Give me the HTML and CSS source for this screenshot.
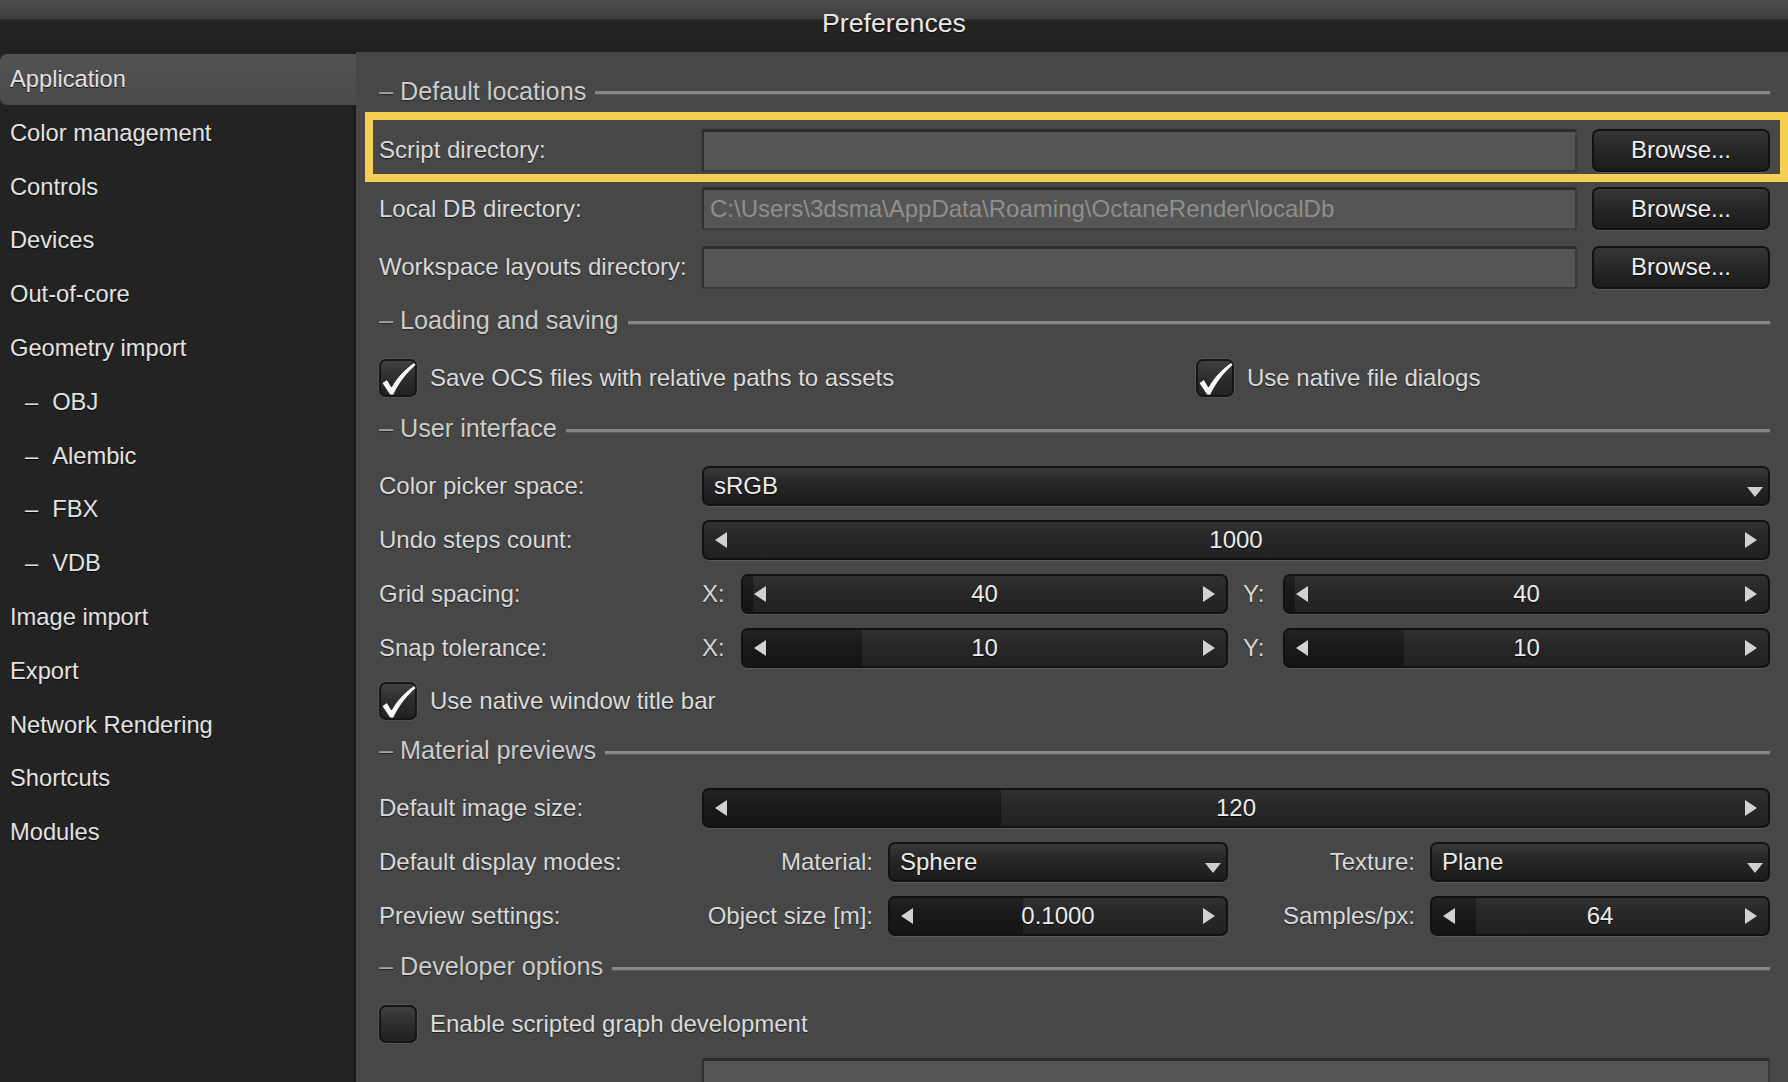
FILE: index.html
```html
<!DOCTYPE html>
<html>
<head>
<meta charset="utf-8">
<title>Preferences</title>
<link rel="stylesheet" href="styles.css">
</head>
<body>
<div class="titlebar"><span class="title">Preferences</span></div>
<div class="body">
  <nav class="sidebar">
    <div class="nav-item active">Application</div>
    <div class="nav-item">Color management</div>
    <div class="nav-item">Controls</div>
    <div class="nav-item">Devices</div>
    <div class="nav-item">Out-of-core</div>
    <div class="nav-item">Geometry import</div>
    <div class="nav-item sub"><span class="sub-dash">–</span>OBJ</div>
    <div class="nav-item sub"><span class="sub-dash">–</span>Alembic</div>
    <div class="nav-item sub"><span class="sub-dash">–</span>FBX</div>
    <div class="nav-item sub"><span class="sub-dash">–</span>VDB</div>
    <div class="nav-item">Image import</div>
    <div class="nav-item">Export</div>
    <div class="nav-item">Network Rendering</div>
    <div class="nav-item">Shortcuts</div>
    <div class="nav-item">Modules</div>
  </nav>
  <main class="content">
    <div class="sec-head"><span class="sec-dash">–</span><span class="sec-title">Default locations</span><span class="sec-line"></span></div>
    <div class="row loc highlighted">
      <span class="label">Script directory:</span>
      <div class="field"></div>
      <div class="btn">Browse...</div>
    </div>
    <div class="row loc">
      <span class="label">Local DB directory:</span>
      <div class="field"><span class="placeholder">C:\Users\3dsma\AppData\Roaming\OctaneRender\localDb</span></div>
      <div class="btn">Browse...</div>
    </div>
    <div class="row loc">
      <span class="label">Workspace layouts directory:</span>
      <div class="field"></div>
      <div class="btn">Browse...</div>
    </div>

    <div class="sec-head"><span class="sec-dash">–</span><span class="sec-title">Loading and saving</span><span class="sec-line"></span></div>
    <div class="row checks">
      <div class="check">
        <span class="box"><svg class="tick" viewBox="0 0 38 38" width="38" height="38"><path d="M3 24 L8 20.5 L12.5 28 C18 18 26 10 35 3.5 L37 6 C28 14 20 24 14.5 36 L11 36 Z"/></svg></span>
        <span class="check-text">Save OCS files with relative paths to assets</span>
      </div>
      <div class="check">
        <span class="box"><svg class="tick" viewBox="0 0 38 38" width="38" height="38"><path d="M3 24 L8 20.5 L12.5 28 C18 18 26 10 35 3.5 L37 6 C28 14 20 24 14.5 36 L11 36 Z"/></svg></span>
        <span class="check-text">Use native file dialogs</span>
      </div>
    </div>

    <div class="sec-head"><span class="sec-dash">–</span><span class="sec-title">User interface</span><span class="sec-line"></span></div>
    <div class="row">
      <span class="label">Color picker space:</span>
      <div class="combo"><span class="combo-text">sRGB</span><span class="combo-arrow"></span></div>
    </div>
    <div class="row">
      <span class="label">Undo steps count:</span>
      <div class="slider"><span class="arr left"></span><span class="val">1000</span><span class="arr right"></span></div>
    </div>
    <div class="row">
      <span class="label">Grid spacing:</span>
      <div class="pair">
        <span class="axis">X:</span>
        <div class="slider"><div class="fill" style="width:2%"></div><span class="arr left"></span><span class="val">40</span><span class="arr right"></span></div>
        <span class="axis y">Y:</span>
        <div class="slider"><div class="fill" style="width:2%"></div><span class="arr left"></span><span class="val">40</span><span class="arr right"></span></div>
      </div>
    </div>
    <div class="row">
      <span class="label">Snap tolerance:</span>
      <div class="pair">
        <span class="axis">X:</span>
        <div class="slider"><div class="fill" style="width:24.6%"></div><span class="arr left"></span><span class="val">10</span><span class="arr right"></span></div>
        <span class="axis y">Y:</span>
        <div class="slider"><div class="fill" style="width:24.6%"></div><span class="arr left"></span><span class="val">10</span><span class="arr right"></span></div>
      </div>
    </div>
    <div class="row checks short">
      <div class="check">
        <span class="box"><svg class="tick" viewBox="0 0 38 38" width="38" height="38"><path d="M3 24 L8 20.5 L12.5 28 C18 18 26 10 35 3.5 L37 6 C28 14 20 24 14.5 36 L11 36 Z"/></svg></span>
        <span class="check-text">Use native window title bar</span>
      </div>
    </div>

    <div class="sec-head"><span class="sec-dash">–</span><span class="sec-title">Material previews</span><span class="sec-line"></span></div>
    <div class="row">
      <span class="label">Default image size:</span>
      <div class="slider"><div class="fill" style="width:27.9%"></div><span class="arr left"></span><span class="val">120</span><span class="arr right"></span></div>
    </div>
    <div class="row">
      <span class="label">Default display modes:</span>
      <div class="mat">
        <span class="sublabel">Material:</span>
        <div class="combo"><span class="combo-text">Sphere</span><span class="combo-arrow"></span></div>
        <span class="sublabel">Texture:</span>
        <div class="combo"><span class="combo-text">Plane</span><span class="combo-arrow"></span></div>
      </div>
    </div>
    <div class="row">
      <span class="label">Preview settings:</span>
      <div class="mat">
        <span class="sublabel">Object size [m]:</span>
        <div class="slider"><div class="fill" style="width:39.7%"></div><span class="arr left"></span><span class="val">0.1000</span><span class="arr right"></span></div>
        <span class="sublabel">Samples/px:</span>
        <div class="slider"><div class="fill" style="width:13%"></div><span class="arr left"></span><span class="val">64</span><span class="arr right"></span></div>
      </div>
    </div>

    <div class="sec-head"><span class="sec-dash">–</span><span class="sec-title">Developer options</span><span class="sec-line"></span></div>
    <div class="row checks">
      <div class="check">
        <span class="box"></span>
        <span class="check-text">Enable scripted graph development</span>
      </div>
    </div>
    <div class="tail">
      <span class="label"></span>
      <div class="field tall"></div>
    </div>
  </main>
</div>
</body>
</html>
```
FILE: styles.css
```css
html, body {
  margin: 0;
  padding: 0;
}
body {
  width: 1788px;
  height: 1082px;
  overflow: hidden;
  background: #474747;
  font-family: "Liberation Sans", Arial, sans-serif;
  font-size: 24px;
  color: #d9d9d9;
}
.titlebar {
  height: 52px;
  box-sizing: border-box;
  padding-top: 5px;
  display: flex;
  justify-content: center;
  background: linear-gradient(#4f4f4f 0, #3c3c3c 19px, #242424 20px, #222222 51px, #1a1a1a 52px);
}
.title {
  font-size: 26.7px;
  line-height: 36px;
  color: #e8e8e8;
  text-shadow: 0 1px 1px rgba(0,0,0,.7);
}
.body {
  display: flex;
  height: 1030px;
}
.sidebar {
  width: 356px;
  flex: none;
  background: #232323;
  box-shadow: inset -3px 0 0 #1b1b1b;
  padding-top: 2px;
  box-sizing: border-box;
}
.nav-item {
  height: 51px;
  margin-bottom: 2.8px;
  display: flex;
  align-items: center;
  padding-left: 10px;
  font-size: 23.7px;
  color: #e3e3e3;
  text-shadow: 0 1px 1px rgba(0,0,0,.8);
}
.nav-item.active {
  background: linear-gradient(#525252, #4b4b4b);
  border-radius: 7px 0 0 7px;
}
.sub-dash {
  margin-left: 15px;
  margin-right: 14px;
}
.content {
  flex: 1;
  padding: 15px 18px 0 23px;
  background: #474747;
  min-width: 0;
}
.sec-head {
  height: 54px;
  box-sizing: border-box;
  padding-bottom: 6px;
  display: flex;
  align-items: center;
  font-size: 25.2px;
  color: #cdcdcd;
  text-shadow: 0 1px 1px rgba(0,0,0,.5);
}
.sec-dash {
  color: #a6a6a6;
  margin-right: 7px;
}
.sec-line {
  flex: 1;
  height: 3px;
  margin-left: 9px;
  margin-top: 4px;
  background: #878787;
  border-bottom: 1px solid #5a5a5a;
}
.row {
  height: 54px;
  display: grid;
  grid-template-columns: 323px 1fr;
  align-items: center;
}
.label {
  color: #dadada;
  text-shadow: 0 1px 1px rgba(0,0,0,.6);
  white-space: nowrap;
}
.row.loc {
  height: 58.5px;
  grid-template-columns: 323px 1fr 178px;
}
.row.highlighted {
  position: relative;
}
.row.highlighted::before {
  content: "";
  position: absolute;
  top: -9px;
  bottom: -2px;
  left: -14px;
  right: -18px;
  border: 8px solid #f6cf55;
  pointer-events: none;
}
.field {
  height: 43px;
  margin-right: 15px;
  box-sizing: border-box;
  background: #555555;
  border-top: 3px solid #2c2c2c;
  border-left: 2px solid #2e2e2e;
  border-right: 2px solid #3a3a3a;
  border-bottom: 2px solid #3c3c3c;
  border-radius: 2px;
  display: flex;
  align-items: center;
  padding-left: 6px;
  overflow: hidden;
}
.placeholder {
  color: #8f8f8f;
  white-space: nowrap;
}
.btn {
  height: 43px;
  box-sizing: border-box;
  border-radius: 7px;
  background: linear-gradient(#363636, #262626 50%, #1c1c1c);
  border: 2px solid #111111;
  box-shadow: 0 1px 0 #5a5a5a;
  display: flex;
  align-items: center;
  justify-content: center;
  color: #f0f0f0;
  text-shadow: 0 1px 1px rgba(0,0,0,.9);
}
.row.checks {
  grid-template-columns: 817px 1fr;
}
.row.checks.short {
  height: 52px;
}
.check {
  display: flex;
  align-items: center;
  gap: 13px;
}
.box {
  width: 38px;
  height: 38px;
  box-sizing: border-box;
  flex: none;
  border-radius: 7px;
  border: 2px solid #161616;
  background: linear-gradient(#404040, #2a2a2a 60%, #222222);
  box-shadow: 0 0 0 1px #555555;
  position: relative;
}
.tick {
  position: absolute;
  left: -2px;
  top: -2px;
  overflow: visible;
}
.tick path {
  fill: #f7f7f7;
  stroke: #1a1a1a;
  stroke-width: 0.8;
}
.check-text {
  color: #dcdcdc;
  text-shadow: 0 1px 1px rgba(0,0,0,.6);
  white-space: nowrap;
}
.combo {
  height: 40px;
  box-sizing: border-box;
  border-radius: 7px;
  border: 2px solid #121212;
  background: linear-gradient(#383838, #262626 45%, #1c1c1c);
  box-shadow: 0 1px 0 #5a5a5a;
  display: flex;
  align-items: center;
  padding-left: 10px;
  padding-right: 5px;
  color: #ececec;
  text-shadow: 0 1px 1px rgba(0,0,0,.9);
}
.combo-text {
  flex: 1;
}
.combo-arrow {
  width: 0;
  height: 0;
  border-top: 10px solid #cfcfcf;
  border-left: 8.5px solid transparent;
  border-right: 8.5px solid transparent;
  align-self: flex-end;
  margin-bottom: 7px;
}
.slider {
  position: relative;
  height: 40px;
  box-sizing: border-box;
  border-radius: 7px;
  border: 2px solid #111111;
  background: linear-gradient(#313131, #272727 45%, #222222);
  box-shadow: 0 1px 0 #5a5a5a;
  display: flex;
  align-items: center;
  padding: 0 11px;
  overflow: hidden;
  color: #ececec;
  text-shadow: 0 1px 1px rgba(0,0,0,.9);
}
.fill {
  position: absolute;
  left: 0;
  top: 0;
  bottom: 0;
  background: linear-gradient(#222222, #191919 50%, #151515);
}
.val {
  flex: 1;
  text-align: center;
  position: relative;
}
.arr {
  width: 0;
  height: 0;
  position: relative;
  border-top: 8.5px solid transparent;
  border-bottom: 8.5px solid transparent;
}
.arr.left {
  border-right: 12px solid #d2d2d2;
}
.arr.right {
  border-left: 12px solid #d2d2d2;
}
.pair {
  display: grid;
  grid-template-columns: 39px 1fr 55px 1fr;
  align-items: center;
}
.axis {
  color: #d6d6d6;
  text-shadow: 0 1px 1px rgba(0,0,0,.6);
}
.axis.y {
  padding-left: 15px;
}
.mat {
  display: grid;
  grid-template-columns: 186px 1fr 202px 1fr;
  align-items: center;
}
.sublabel {
  text-align: right;
  padding-right: 15px;
  color: #dadada;
  text-shadow: 0 1px 1px rgba(0,0,0,.6);
  white-space: nowrap;
}
.tail {
  display: grid;
  grid-template-columns: 323px 1fr;
  padding-top: 7.5px;
}
.field.tall {
  height: 44px;
  margin-right: 0;
}
```
